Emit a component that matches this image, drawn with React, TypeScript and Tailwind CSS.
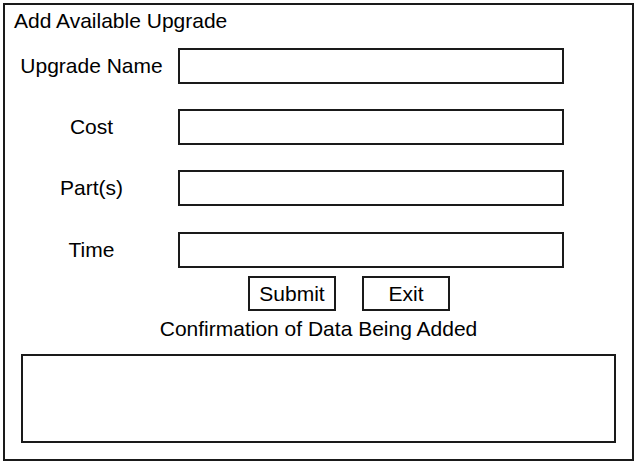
import React from 'react';

const fields = [
  { label: 'Upgrade Name', mt: 'mt-[15px]' },
  { label: 'Cost', mt: 'mt-[25px]' },
  { label: 'Part(s)', mt: 'mt-[25px]' },
  { label: 'Time', mt: 'mt-[26px]' },
];

const App: React.FC = () => {
  return (
    <div className="w-[638px] h-[464px] bg-white pt-[3px] pl-[3px] font-['Liberation_Sans',Arial,sans-serif] text-black text-[21px] leading-[24px]">
      <div className="w-[631px] h-[458px] border-2 border-[#1a1a1a] flex flex-col">
        <div className="pl-[9px] pt-[4px]">Add Available Upgrade</div>

        {fields.map((f) => (
          <div key={f.label} className={`flex items-center ${f.mt}`}>
            <div className="w-[173px] text-center">{f.label}</div>
            <div className="w-[386px] h-[36px] border-2 border-[#1a1a1a]" />
          </div>
        ))}

        <div className="flex mt-[8px] ml-[243px] gap-[26px]">
          <button className="w-[88px] h-[35px] border-2 border-[#1a1a1a] flex items-center justify-center">
            Submit
          </button>
          <button className="w-[88px] h-[35px] border-2 border-[#1a1a1a] flex items-center justify-center">
            Exit
          </button>
        </div>

        <div className="text-center mt-[6px]">Confirmation of Data Being Added</div>

        <div className="ml-[16px] mt-[13px] w-[595px] h-[89px] border-2 border-[#1a1a1a]" />
      </div>
    </div>
  );
};

export default App;
